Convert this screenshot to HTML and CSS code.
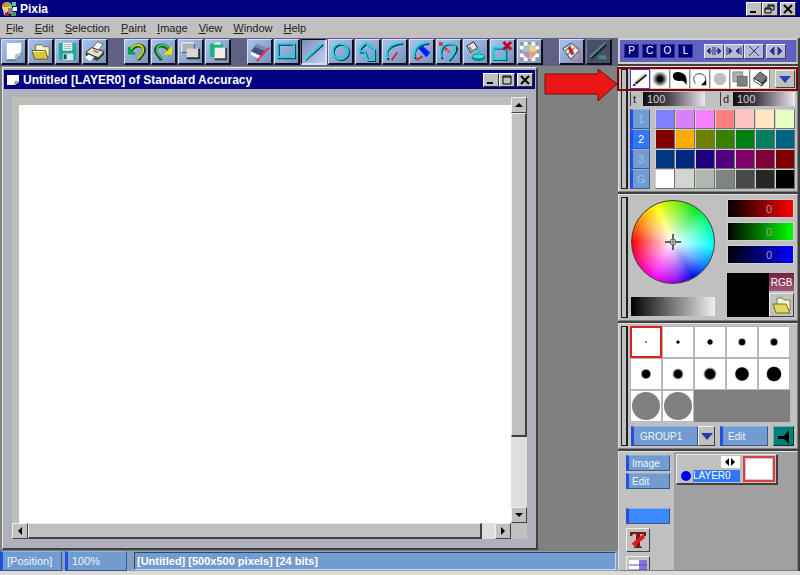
FILE: index.html
```html
<!DOCTYPE html>
<html lang="en">
<head>
  <meta charset="UTF-8" />
  <meta name="viewport" content="width=device-width, initial-scale=1.0"/>
  <title>Pixia</title>
  <link rel="stylesheet" href="styles.css">
</head>
<body>
  <header class="titlebar">
    <svg class="logo" viewBox="0 0 16 16">
      <circle cx="6" cy="6" r="5" fill="#e8d860"/>
      <path d="M1 6a5 5 0 0 1 5-5v5z" fill="#f08030"/>
      <path d="M6 1a5 5 0 0 1 5 5H6z" fill="#70c850"/>
      <path d="M2 9h4v5H3z" fill="#e0b0a0"/>
      <path d="M7 7h5v6H7z" fill="#a070a0"/>
      <path d="M11 1h4v4h-4z" fill="#58c878"/>
      <path d="M12 6h4v4h-4z" fill="#fff"/>
      <path d="M10 11h5v4h-5z" fill="#40a050"/>
      <path d="M4 12h4v3H4z" fill="#a02020"/>
    </svg>
    <h1>Pixia</h1>
    <div class="window-buttons">
      <button class="win-btn" aria-label="Minimize"><svg viewBox="0 0 12 10"><path d="M2 8h6" stroke="#000" stroke-width="2"/></svg></button>
      <button class="win-btn" aria-label="Restore"><svg viewBox="0 0 12 10"><path d="M4 4V1h6v5H8M4 2h6M1 4h6v5H1zM1 5h6" fill="none" stroke="#000"/></svg></button>
      <button class="win-btn close" aria-label="Close"><svg viewBox="0 0 12 10"><path d="M2 1l8 8M10 1L2 9" stroke="#000" stroke-width="2"/></svg></button>
    </div>
  </header>

  <nav class="menubar">
    <button><u>F</u>ile</button>
    <button><u>E</u>dit</button>
    <button><u>S</u>election</button>
    <button><u>P</u>aint</button>
    <button><u>I</u>mage</button>
    <button><u>V</u>iew</button>
    <button><u>W</u>indow</button>
    <button><u>H</u>elp</button>
  </nav>

  <main class="main">
    <div class="left">
      <!-- Toolbar -->
      <div class="toolbar">
        <div class="tool-group">
          <button class="tool" aria-label="New"><svg viewBox="0 0 24 24"><path d="M5 3h15v12l-5 5H5z" fill="#fff"/><path d="M20 13l-7 8 1-6z" fill="#b8b8b8"/><path d="M20 13v2l-6 6h-9" fill="none" stroke="#405070"/></svg></button>
          <button class="tool" aria-label="Open"><svg viewBox="0 0 24 24"><path d="M7 5h6l2 2h6v10H7z" fill="#f8f8c8" stroke="#707040"/><path d="M3 11h14l3 9H6z" fill="#d8c840" stroke="#605820"/><path d="M4 12h12" stroke="#fff8a0"/></svg></button>
          <button class="tool" aria-label="Save"><svg viewBox="0 0 24 24"><path d="M3 3h18v18H5l-2-2z" fill="#20a898"/><path d="M7 3h10v8H7z" fill="#fff"/><path d="M8 5h8M8 7h8M8 9h8" stroke="#90a8a8"/><path d="M7 14h11v7H7z" fill="#d8e0e0"/><path d="M8 15h3v5H8z" fill="#105060"/></svg></button>
          <button class="tool" aria-label="Print"><svg viewBox="0 0 24 24"><path d="M10 8l5-6 6 2-5 7z" fill="#fff" stroke="#707070"/><path d="M3 13l6-5 13 4-6 7z" fill="#e8e0d0" stroke="#303030"/><path d="M3 13v4l12 5 7-7v-3l-6 6z" fill="#404040"/><path d="M2 18l4-3 6 3-5 4z" fill="#fff"/><path d="M11 11l5 2" stroke="#a08840" stroke-width="2"/></svg></button>
        </div>
        <div class="tool-group">
          <button class="tool" aria-label="Undo"><svg viewBox="0 0 24 24"><path d="M6 11c4-7 14-7 14 0 0 4-4 5-6 10" fill="none" stroke="#304020" stroke-width="4"/><path d="M6 10c4-7 13-6 13 1 0 4-4 5-6 9" fill="none" stroke="#b8e000" stroke-width="2"/><path d="M3 6v9h9z" fill="#00a050"/></svg></button>
          <button class="tool" aria-label="Redo"><svg viewBox="0 0 24 24"><path d="M18 11C14 4 4 4 4 11c0 4 4 5 6 10" fill="none" stroke="#205028" stroke-width="4"/><path d="M18 10C14 3 5 4 5 11c0 4 4 5 6 9" fill="none" stroke="#30c858" stroke-width="2"/><path d="M21 6v9h-9z" fill="#f0e000"/></svg></button>
          <button class="tool" aria-label="Copy"><svg viewBox="0 0 24 24"><path d="M3 3h13v10H3z" fill="#b0b0b0"/><path d="M3 13V3h13" fill="none" stroke="#fff"/><path d="M3 13h13V4" fill="none" stroke="#505050"/><path d="M8 9h13v10H8z" fill="#d8d8d8"/><path d="M8 19h13V9" fill="none" stroke="#303030" stroke-width="2"/></svg></button>
          <button class="tool" aria-label="Paste"><svg viewBox="0 0 24 24"><path d="M4 4h14v14H4z" fill="#20b088"/><path d="M8 5l2-3h4l2 3z" fill="#c8f0e0"/><path d="M9 8h12v12H9z" fill="#f0f0e8"/><path d="M9 20h12V8" fill="none" stroke="#404040" stroke-width="2"/></svg></button>
        </div>
        <div class="tool-group">
          <button class="tool" aria-label="Eraser"><svg viewBox="0 0 24 24"><path d="M9 4l11 5-6 8-11-5z" fill="#485080"/><path d="M9 4l11 5-1 3L7 7z" fill="#8088b8"/><path d="M3 12l11 5-2 3-9-5z" fill="#fff"/><path d="M9 22L22 8" stroke="#e83050" stroke-width="2"/></svg></button>
          <button class="tool" aria-label="Rectangle"><svg viewBox="0 0 24 24" class="stroke"><path class="shade" d="M4 5h17v14H4z"/><path d="M3 4h17v14H3z"/></svg></button>
          <button class="tool pressed" aria-label="Line"><svg viewBox="0 0 24 24" class="stroke"><path class="shade" d="M4 21L22 5"/><path d="M3 21L21 4"/></svg></button>
          <button class="tool" aria-label="Ellipse"><svg viewBox="0 0 24 24" class="stroke"><circle class="shade" cx="13" cy="13" r="8"/><circle cx="12" cy="12" r="8"/></svg></button>
          <button class="tool" aria-label="Polygon"><svg viewBox="0 0 24 24" class="stroke"><path class="shade" d="M5 10l6-6 9 7v11h-7l-3-9H5z"/><path d="M4 9l6-6 9 7v11h-7l-3-9H4z"/></svg></button>
          <button class="tool" aria-label="Curve"><svg viewBox="0 0 24 24" class="stroke"><path class="shade" d="M6 21c-4-9 0-15 15-17"/><path d="M5 19C2 11 6 4 20 3"/><path class="red" d="M9 21l6-8"/></svg></button>
          <button class="tool" aria-label="Painted curve"><svg viewBox="0 0 24 24" class="stroke"><path class="shade" d="M6 20C3 11 8 5 20 4"/><path d="M5 18C3 10 8 4 18 3"/><path class="red" d="M7 21l6-4"/><path d="M9 9l4-3 8 7-4 5z" fill="#0020e8" stroke="none"/></svg></button>
          <button class="tool" aria-label="Bezier curve"><svg viewBox="0 0 24 24" class="stroke"><path class="shade" d="M6 20c-3-5-1-17 10-15 9 2 4 9-3 17"/><path d="M5 18C2 12 5 3 14 4c9 1 5 10-2 17"/><path d="M2 2h4v4H2zM8 8h3v3H8zM11 11h2v2h-2z" fill="#e03040" stroke="none"/></svg></button>
          <button class="tool" aria-label="Pour"><svg viewBox="0 0 24 24"><path d="M3 6l7-4 4 6-7 5z" fill="#e8e8e8" stroke="#202020"/><path d="M5 7l5 5" stroke="#909090" stroke-width="2"/><ellipse cx="15" cy="18" rx="7" ry="4" fill="#008890"/><path d="M13 9c4 0 3 4 3 8" fill="none" stroke="#20c8c8" stroke-width="2"/><ellipse cx="15" cy="17" rx="6" ry="2" fill="#40e0d8"/></svg></button>
          <button class="tool" aria-label="Remove area"><svg viewBox="0 0 24 24" class="stroke"><path class="shade" d="M3 9h13v12H3z"/><path d="M3 8h12v12H3z"/><path d="M13 2l8 8M21 2l-8 8" stroke="#c00020" stroke-width="3"/></svg></button>
          <button class="tool" aria-label="Pick colour"><svg viewBox="0 0 24 24"><path d="M2 2h20v20H2z" fill="#fff"/><path d="M2 2h4v4H2zM10 2h4v3h-4zM18 2h4v4h-4zM2 10h3v4H2zM19 10h3v4h-3zM2 18h4v4H2zM10 19h4v3h-4zM18 18h4v4h-4zM6 6h2v2H6zM16 6h2v2h-2z" fill="#989898"/><circle cx="12" cy="12" r="7" fill="#d8c890"/><path d="M12 5a7 7 0 0 1 7 7h-7z" fill="#e8d880"/><path d="M12 5a7 7 0 0 0-7 7h7z" fill="#a0c8b8"/><path d="M5 12a7 7 0 0 0 7 7v-7z" fill="#a890d8"/><path d="M19 12a7 7 0 0 1-7 7v-7z" fill="#e8a080"/></svg></button>
        </div>
        <div class="tool-group">
          <button class="tool" aria-label="Fill"><svg viewBox="0 0 24 24"><path d="M3 9l9-6 8 8-9 9z" fill="#f0f0e8" stroke="#303030"/><path d="M5 12l7-7M8 15l7-7" stroke="#989898" stroke-width="2"/><path d="M8 8l3-1 4 7-3 2z" fill="#c02020"/><path d="M16 7c5 0 5 6 5 14H11" fill="none" stroke="#f05858"/></svg></button>
          <button class="tool dark" aria-label="Pen"><svg viewBox="0 0 24 24"><path d="M4 19L20 4" stroke="#182830" stroke-width="4"/><path d="M3 18L19 3" stroke="#608890" stroke-width="2"/><path d="M12 16h8v4h-8z" fill="#389070"/></svg></button>
        </div>
      </div>

      <div class="workspace">
        <section class="document">
          <div class="doc-title">
            <svg class="doc-icon" viewBox="0 0 14 12"><path d="M1 1h12v7l-4 3H1z" fill="#fff"/><path d="M13 7l-5 4 1-4z" fill="#909090"/></svg>
            <h2>Untitled [LAYER0] of Standard Accuracy</h2>
            <div class="window-buttons">
              <button class="win-btn" aria-label="Minimize"><svg viewBox="0 0 12 10"><path d="M2 8h6" stroke="#000" stroke-width="2"/></svg></button>
              <button class="win-btn" aria-label="Maximize"><svg viewBox="0 0 12 10"><path d="M2 1h8v8H2zM2 2h8" fill="none" stroke="#000"/></svg></button>
              <button class="win-btn close" aria-label="Close"><svg viewBox="0 0 12 10"><path d="M2 1l8 8M10 1L2 9" stroke="#000" stroke-width="2"/></svg></button>
            </div>
          </div>
          <div class="doc-body">
            <div class="mat"><div class="canvas"></div></div>
            <div class="scroll vertical">
              <button aria-label="Scroll up"><svg viewBox="0 0 8 8"><path d="M0 6l4-4 4 4z"/></svg></button>
              <div class="thumb"></div>
              <button aria-label="Scroll down"><svg viewBox="0 0 8 8"><path d="M0 2l4 4 4-4z"/></svg></button>
            </div>
            <div class="scroll horizontal">
              <button aria-label="Scroll left"><svg viewBox="0 0 8 8"><path d="M6 0L2 4l4 4z"/></svg></button>
              <div class="thumb"></div>
              <button aria-label="Scroll right"><svg viewBox="0 0 8 8"><path d="M2 0l4 4-4 4z"/></svg></button>
            </div>
            <div class="corner"></div>
          </div>
        </section>
        <svg class="arrow" viewBox="0 0 74 34"><path d="M1 6h53V1l19 15-19 17v-7H1z" fill="#ed1616" stroke="#701010"/></svg>
      </div>

      <footer class="statusbar">
        <button class="flat position">[Position]</button>
        <button class="flat percent">100%</button>
        <p>[Untitled] [500x500 pixels] [24 bits]</p>
      </footer>
    </div>

    <aside class="dock">
      <div class="dock-header">
        <div class="letters">
          <button>P</button><button>C</button><button>O</button><button>L</button>
        </div>
        <div class="arrange">
          <button aria-label="Spread"><svg viewBox="0 0 16 10"><path d="M1 5l3-3v6zM15 5l-3-3v6zM4 5h2M10 5h2M7 1v8M9 1v8"/></svg></button>
          <button aria-label="Gather"><svg viewBox="0 0 16 10"><path d="M6 5L3 2v6zM10 5l3-3v6zM1 1v8M15 1v8"/></svg></button>
          <button aria-label="Close panels"><svg viewBox="0 0 16 10"><path d="M3 0l10 10M13 0L3 10"/></svg></button>
          <button aria-label="Move panels"><svg viewBox="0 0 16 10"><path d="M6 1v8L2 5zM10 1v8l4-4z"/></svg></button>
        </div>
      </div>

      <!-- Pen and palette -->
      <section class="panel">
        <div class="grip"></div>
        <div class="panel-body">
          <div class="pens">
            <button class="pen selected" aria-label="Pencil"><svg viewBox="0 0 18 18"><path d="M4 14L16 4" stroke="#202020" stroke-width="3"/><path d="M4 12L15 3" stroke="#c8c8c8" stroke-width="2"/><path d="M1 17l1-3 3 2z"/></svg></button>
            <button class="pen" aria-label="Airbrush"><span class="blur-dot"></span></button>
            <button class="pen" aria-label="Water"><svg viewBox="0 0 18 18"><path d="M1 6c0-6 9-6 13-2 3 3 3 8 2 12-1-3-3-5-6-5C5 12 1 10 1 6z"/></svg></button>
            <button class="pen" aria-label="Rotate"><svg viewBox="0 0 18 18"><path d="M4 14C-1 8 4 3 8 3c7 0 9 6 6 10" fill="none" stroke="#303030"/><path d="M16 10v6h-6z"/></svg></button>
            <button class="pen" aria-label="Blend"><svg viewBox="0 0 18 18"><circle cx="9" cy="9" r="7" fill="#c0c0c0"/></svg></button>
            <button class="pen" aria-label="Stamp"><svg viewBox="0 0 18 18"><path d="M1 1h11v11H1z" fill="#b0b0b0" stroke="#808080"/><path d="M6 6h11v11H6z" fill="#808080" stroke="#606060"/></svg></button>
            <button class="pen" aria-label="Erase"><svg viewBox="0 0 18 18"><path d="M9 1l8 6-6 7-9-6z" fill="#787878" stroke="#303030"/><path d="M2 8v3l9 6v-3z" fill="#fff" stroke="#303030"/><path d="M11 14v3l6-6V7z" fill="#404040"/></svg></button>
            <button class="more" aria-label="More pens"><svg viewBox="0 0 12 8"><path d="M0 1h12L6 8z" fill="#2840c0"/></svg></button>
          </div>
          <div class="amounts">
            <label for="thickness">t</label><input id="thickness" value="100">
            <label for="density">d</label><input id="density" value="100">
          </div>
          <div class="palette">
            <div class="tabs">
              <button>1</button><button class="active">2</button><button>3</button><button>G</button>
            </div>
            <div class="swatches" id="swatches"></div>
          </div>
        </div>
        <div class="highlight"></div>
      </section>

      <!-- Colour mixer -->
      <section class="panel">
        <div class="grip"></div>
        <div class="panel-body mixer">
          <div class="wheel-box">
            <div class="wheel"><svg viewBox="0 0 16 16"><path d="M8 0v16M0 8h16" stroke="#606060" stroke-width="2"/><circle cx="8" cy="8" r="3" fill="#d8d8d8" stroke="#606060"/><path d="M8 5v6M5 8h6" stroke="#707070"/></svg></div>
            <div class="value-bar"></div>
          </div>
          <div class="channels">
            <input class="red-channel" aria-label="Red" value="0">
            <input class="green-channel" aria-label="Green" value="0">
            <input class="blue-channel" aria-label="Blue" value="0">
            <div class="current">
              <div class="current-color"></div>
              <div class="current-side">
                <button class="rgb">RGB</button>
                <button class="folder" aria-label="Open palette"><svg viewBox="0 0 20 20"><path d="M5 3h5l2 2h6v10H5z" fill="#f8f8d0" stroke="#808050"/><path d="M1 9h13l4 9H4z" fill="#e0d858" stroke="#707020"/></svg></button>
              </div>
            </div>
          </div>
        </div>
      </section>

      <!-- Brush tips -->
      <section class="panel">
        <div class="grip"></div>
        <div class="panel-body">
          <div class="brushes" id="brushes"></div>
          <div class="brush-controls">
            <button class="flat group">GROUP1</button>
            <button class="more small" aria-label="Choose group"><svg viewBox="0 0 12 8"><path d="M0 1h12L6 8z" fill="#3038a8"/></svg></button>
            <button class="flat edit">Edit</button>
            <button class="sound" aria-label="Back"><svg viewBox="0 0 18 18"><path d="M14 2v14L9 11H3V8h6z"/></svg></button>
          </div>
        </div>
      </section>

      <!-- Layers -->
      <section class="panel layers">
        <div class="layer-buttons">
          <button class="flat">Image</button>
          <button class="flat">Edit</button>
          <button class="flat bright" aria-label="Layer mode"></button>
          <button class="icon-btn" aria-label="Text"><svg viewBox="0 0 20 20"><path d="M2 2h16v4h-2l-1-2h-3v12l2 1v1H6v-1l2-1V4H5L4 6H2z" fill="#801818"/><path d="M5 15L16 6" stroke="#e01818" stroke-width="4"/></svg></button>
          <button class="icon-btn" aria-label="Layer list"><svg viewBox="0 0 20 20"><path d="M1 2h10v16H1z" fill="#fff"/><path d="M11 2h8v16h-8z" fill="#8078e0"/><path d="M1 7h18M1 12h18" stroke="#5050a0"/></svg></button>
        </div>
        <div class="layer-list">
          <div class="layer">
            <div class="layer-info">
              <button class="layer-move" aria-label="Reorder"><svg viewBox="0 0 12 8"><path d="M5 0v8L1 4zM7 0v8l4-4z"/></svg></button>
              <div class="layer-name"><span class="dot"></span><span class="name">LAYER0</span></div>
            </div>
            <div class="thumbnail"></div>
          </div>
        </div>
      </section>
    </aside>
  </main>

  <script>
    const colors = [
      "#8080ff", "#d980ff", "#f880ff", "#ff8080", "#ffc4c4", "#ffe6c0", "#e4ffc0",
      "#800000", "#ffaa00", "#6f8000", "#388000", "#008010", "#008060", "#006480",
      "#003880", "#002880", "#200080", "#500080", "#800068", "#800038", "#800000",
      "#ffffff", "#d2d6d0", "#b0b6b0", "#808480", "#484a48", "#262826", "#000000"
    ];
    const swatches = document.getElementById("swatches");
    colors.forEach(color => {
      const swatch = document.createElement("button");
      swatch.style.background = color;
      swatch.setAttribute("aria-label", color);
      swatches.appendChild(swatch);
    });

    // radius of each tip and how much of it is soft
    const tips = [[1, 0], [1.5, 0], [2.5, 0], [3, 1.5], [3, 2], [4, 2], [4, 3], [5, 3], [6.5, 1], [7, 1]];
    const brushes = document.getElementById("brushes");
    for (let i = 0; i < 15; i++) {
      const brush = document.createElement("button");
      brush.setAttribute("aria-label", "Brush " + (i + 1));
      if (i === 0) brush.className = "selected";
      if (i < 10) {
        const [r, soft] = tips[i];
        const fill = i === 0 ? "#888" : "#000";
        brush.innerHTML = `<svg viewBox="0 0 30 30"><circle cx="15" cy="15" r="${r + soft / 2}" fill="#aaa"/><circle cx="15" cy="15" r="${r + soft / 4}" fill="#666"/><circle cx="15" cy="15" r="${r}" fill="${fill}"/></svg>`;
      } else if (i < 12) {
        brush.innerHTML = '<svg viewBox="0 0 30 30"><circle cx="15" cy="15" r="14" fill="#808080"/></svg>';
      } else {
        brush.className = "empty";
      }
      brushes.appendChild(brush);
    }
  </script>
</body>
</html>
```

FILE: styles.css
```css
* {
  box-sizing: border-box;
}

body {
  margin: 0;
  height: 100vh;
  overflow: hidden;
  display: flex;
  flex-direction: column;
  background: #dcdcd4;
  font-family: "Liberation Sans", Arial, sans-serif;
  font-size: 11px;
  color: #202020;
}

button,
input {
  margin: 0;
  padding: 0;
  border: 0;
  border-radius: 0;
  font: inherit;
  color: inherit;
}

h1,
h2,
p {
  margin: 0;
}

svg {
  display: block;
}

/* Title and menu */
.titlebar {
  flex: none;
  height: 17px;
  padding: 0 4px 0 1px;
  display: flex;
  align-items: center;
  background: #000080;
  color: #fff;
}

.logo {
  width: 16px;
  height: 16px;
  margin-right: 3px;
}

h1,
h2 {
  flex: 1;
  font-size: 12px;
  font-weight: bold;
}

.window-buttons {
  display: flex;
}

.win-btn {
  width: 16px;
  height: 14px;
  padding: 1px;
  background: #c0c0c0;
  border: 1px solid;
  border-color: #fff #303030 #303030 #fff;
}

.win-btn svg {
  width: 12px;
  height: 10px;
}

.win-btn.close {
  margin-left: 2px;
}

.menubar {
  flex: none;
  height: 21px;
  display: flex;
  align-items: center;
  background: #c0c0c0;
}

.menubar button {
  padding: 0 5px 0 6px;
  background: none;
}

.main {
  flex: 1;
  min-height: 0;
  margin-bottom: 4px;
  display: flex;
  padding-right: 2px;
  background: #404040;
}

.left {
  flex: 1;
  min-width: 0;
  display: flex;
  flex-direction: column;
}

/* Toolbar */
.toolbar {
  flex: none;
  height: 28px;
  padding: 1px;
  display: flex;
  gap: 16px;
  background: #606084;
}

.tool-group {
  display: flex;
  gap: 1px;
}

.tool {
  width: 26px;
  height: 26px;
  background: linear-gradient(135deg, #a8c4ec, #7890c0);
  border: 1px solid;
  border-color: #d0e0f8 #101018 #101018 #d0e0f8;
  border-right-width: 2px;
  border-bottom-width: 2px;
}

.tool svg {
  width: 23px;
  height: 23px;
}

.tool.pressed {
  background: linear-gradient(135deg, #7890c0, #c0d0f0);
  border-color: #101018 #d0e0f8 #d0e0f8 #101018;
}

.tool.dark {
  background: #485068;
  border-color: #788098 #101018 #101018 #788098;
}

.stroke {
  fill: none;
  stroke: #10dce0;
  stroke-width: 2;
}

.stroke .shade {
  stroke: #103050;
}

.stroke .red {
  stroke: #e02030;
}

/* Document window */
.workspace {
  flex: 1;
  min-height: 0;
  padding: 1px 0 1px 2px;
  display: flex;
  gap: 6px;
  background: #808080;
}

.document {
  flex: 1;
  display: flex;
  flex-direction: column;
  padding: 2px 1px 1px;
  background: #b0b0bc;
  border: 1px solid;
  border-color: #e8e8e8 #404040 #404040 #e8e8e8;
  border-right-width: 2px;
  border-bottom-width: 2px;
}

.doc-title {
  flex: none;
  height: 19px;
  padding: 0 2px;
  display: flex;
  align-items: center;
  background: #000080;
  color: #fff;
}

.doc-icon {
  width: 14px;
  height: 12px;
  margin-right: 3px;
}

.doc-body {
  flex: 1;
  margin: 8px;
  display: grid;
  grid-template-columns: 1fr 16px;
  grid-template-rows: 1fr 16px;
}

.mat {
  padding: 8px 0 0 7px;
  background: #b8c0b8;
}

.canvas {
  height: 100%;
  background: #fff;
}

.scroll {
  display: flex;
  background: #dedede;
}

.scroll button,
.thumb,
.more,
.icon-btn,
.folder {
  background: #c0c0c0;
  border: 1px solid;
  border-color: #eee #404040 #404040 #eee;
}

.scroll button {
  flex: none;
  width: 16px;
  height: 16px;
  padding: 3px;
}

.scroll button svg {
  width: 8px;
  height: 8px;
}

.scroll button:last-child {
  margin: auto 0 0 auto;
}

.thumb {
  border-width: 1px 2px 2px 1px;
}

.vertical {
  flex-direction: column;
}

.vertical .thumb {
  height: 76%;
}

.horizontal .thumb {
  width: 91%;
}

.corner {
  background: #c0c0c0;
}

.arrow {
  flex: none;
  width: 74px;
  height: 34px;
  margin-top: 1px;
}

/* Status bar */
.statusbar {
  flex: none;
  height: 20px;
  display: flex;
  gap: 3px;
  background: #88a0c0;
  color: #fff;
}

.flat {
  background: #729cd0;
  border: 1px solid;
  border-color: #88b0e0 #385888 #385888 #2050e0;
  border-left-width: 3px;
  color: #e8f4ff;
  text-align: left;
  font-size: 10px;
}

.statusbar .flat {
  width: 62px;
  padding-left: 4px;
  font-size: 11px;
}

.statusbar p {
  flex: 1;
  margin: 1px 2px 1px 4px;
  padding-left: 2px;
  line-height: 17px;
  background: #729cd0;
  border: 1px solid;
  border-color: #304868 #c0d8f0 #c0d8f0 #304868;
  font-weight: bold;
}

/* Dock */
.dock {
  flex: none;
  width: 180px;
  display: flex;
  flex-direction: column;
  gap: 2px;
}

.dock-header {
  height: 26px;
  display: flex;
  align-items: center;
  justify-content: space-between;
  padding: 0 10px 0 4px;
  background: #6060c0;
  border: 2px solid;
  border-color: #d0d0d0 #a0a0a0 #d0d0d0 #d0d0d0;
}

.letters {
  display: flex;
  gap: 3px;
}

.letters button {
  width: 15px;
  height: 14px;
  background: #000080;
  border: 1px solid #303090;
  color: #fff;
  font-size: 10px;
  line-height: 12px;
}

.arrange {
  display: flex;
}

.arrange button {
  width: 20px;
  height: 15px;
  padding: 1px;
  background: #b8b8d8;
  border: 1px solid;
  border-color: #e8e8f8 #404060 #404060 #e8e8f8;
}

.arrange svg {
  width: 16px;
  height: 10px;
  fill: #303080;
  stroke: #303080;
}

.arrange button:last-child {
  margin-left: 2px;
}

.panel {
  position: relative;
  display: flex;
  gap: 2px;
  padding: 2px;
  background: #c0c0c0;
  border: 1px solid;
  border-color: #e0e0e0 #808080 #808080 #e0e0e0;
}

.grip {
  width: 7px;
  background: #c0c0c0;
  border: 1px solid #202020;
  border-right-width: 2px;
}

.panel-body {
  flex: 1;
}

.pens {
  display: flex;
  height: 20px;
}

.pen {
  width: 20px;
  padding: 1px;
  background: #fff;
  border: 1px solid #d0d0d0;
  border-right-color: #888;
}

.pen.selected {
  border-color: #4040e0;
}

.pen svg {
  width: 16px;
  height: 16px;
}

.blur-dot {
  display: block;
  width: 16px;
  height: 16px;
  background: radial-gradient(#000 20%, #fff 70%);
}

.more {
  display: flex;
  align-items: center;
  justify-content: center;
}

.pens .more {
  width: 20px;
  height: 18px;
  margin: 1px 0 0 auto;
}

.more svg {
  width: 12px;
  height: 8px;
}

.highlight {
  position: absolute;
  top: 0;
  left: -2px;
  right: -1px;
  height: 24px;
  border: 2px solid #800000;
}

.amounts {
  display: flex;
  height: 14px;
  margin: 3px 0;
}

.amounts label {
  width: 13px;
  line-height: 14px;
  padding-left: 2px;
  border-left: 1px solid #404040;
}

.amounts label + input + label {
  margin-left: auto;
}

.amounts input {
  width: 62px;
  padding-left: 4px;
  background: linear-gradient(to right, #101010, #484048 40%, #f0e8f0);
  color: #d0d0d0;
}

.palette {
  display: flex;
  justify-content: space-between;
}

.tabs {
  display: grid;
  grid-template-rows: repeat(4, 20px);
}

.tabs button {
  width: 20px;
  background: #729cd0;
  border: 1px solid;
  border-color: #90b0d8 #405890 #405890 #2050e0;
  border-left-width: 3px;
  color: #a0c0e8;
}

.tabs .active {
  background: #3078f8;
  color: #fff;
}

.swatches {
  display: grid;
  grid-template-columns: repeat(7, 20px);
  grid-template-rows: repeat(4, 20px);
}

.swatches button {
  border: 1px solid;
  border-color: #d0d0d0 #707070 #707070 #d0d0d0;
}

/* Mixer */
.mixer {
  display: flex;
  justify-content: space-between;
  padding: 2px 1px 1px 1px;
}

.wheel {
  width: 84px;
  height: 84px;
  margin-top: 1px;
  display: flex;
  align-items: center;
  justify-content: center;
  border: 1px solid #404040;
  border-radius: 50%;
  background:
    radial-gradient(closest-side, #fff, rgba(255, 255, 255, 0.5) 50%, rgba(255, 255, 255, 0)),
    conic-gradient(#90f000, #00e820 35deg, #00ffa0 65deg, #00ffff 95deg, #0080ff 125deg, #0000e8 150deg, #9000f0 175deg, #ff00f0 210deg, #ff0080 240deg, #ff0000 270deg, #ff8000 300deg, #ffff00 335deg, #90f000);
}

.wheel svg {
  width: 16px;
  height: 16px;
}

.value-bar {
  width: 84px;
  height: 19px;
  margin-top: 13px;
  background: linear-gradient(to right, #000, #f0f0f0);
}

.channels {
  width: 67px;
  display: flex;
  flex-direction: column;
  gap: 4px;
}

.channels input {
  width: 67px;
  height: 19px;
  padding-left: 38px;
  border: 1px solid #d0d0d0;
  color: #a0a0a0;
}

.red-channel {
  background: linear-gradient(to right, #000, #f00);
}

.green-channel {
  background: linear-gradient(to right, #000, #0f0);
}

.blue-channel {
  background: linear-gradient(to right, #000, #00f);
}

.current {
  display: flex;
  height: 44px;
  margin-top: 5px;
}

.current-color {
  flex: 1;
  background: #000;
}

.current-side {
  width: 25px;
  display: flex;
  flex-direction: column;
  gap: 2px;
}

.rgb {
  height: 18px;
  background: linear-gradient(#702040, #a05878);
  color: #fff;
  font-size: 10px;
}

.folder {
  flex: 1;
  padding: 1px 2px;
}

.folder svg {
  width: 20px;
  height: 20px;
}

/* Brushes */
.brushes {
  display: grid;
  grid-template-columns: repeat(5, 32px);
  grid-template-rows: repeat(3, 32px);
}

.brushes button {
  background: #fff;
  border: 1px solid #b8b8b8;
}

.brushes svg {
  width: 30px;
  height: 30px;
}

.brushes .selected {
  border: 2px solid #e02020;
}

.brushes .selected svg {
  width: 28px;
  height: 28px;
}

.brushes .empty {
  background: #808080;
  border-color: #808080;
}

.brush-controls {
  display: flex;
  height: 20px;
  margin: 4px 1px 0 1px;
}

.brush-controls .group {
  width: 67px;
  padding-left: 6px;
}

.more.small {
  width: 17px;
}

.brush-controls .edit {
  width: 48px;
  margin: 0 auto;
  padding-left: 5px;
}

.sound {
  width: 21px;
  padding: 1px;
  background: #008078;
  border: 1px solid;
  border-color: #60b0a8 #003030 #003030 #60b0a8;
}

.sound svg {
  width: 18px;
  height: 18px;
}

/* Layers */
.layers {
  flex: 1;
  min-height: 0;
  padding: 0;
  gap: 3px;
  overflow: hidden;
}

.layer-buttons {
  width: 52px;
  padding: 3px 0 0 7px;
  display: flex;
  flex-direction: column;
  align-items: flex-start;
  gap: 2px;
}

.layer-buttons .flat {
  flex: none;
  width: 44px;
  height: 16px;
  padding-left: 3px;
}

.layer-buttons .bright {
  margin-top: 17px;
  background: #4088ff;
}

.icon-btn {
  flex: none;
  width: 24px;
  height: 24px;
  margin-top: 2px;
  padding: 1px;
}

.icon-btn svg {
  width: 20px;
  height: 20px;
}

.layer-list {
  flex: 1;
  background: #a0a0a0;
  padding: 2px;
}

.layer {
  width: 102px;
  height: 31px;
  padding: 1px;
  display: flex;
  justify-content: space-between;
  background: #c0c0c0;
  border: 1px solid;
  border-color: #e8e8e8 #404040 #404040 #e8e8e8;
  border-width: 1px 2px 2px 1px;
}

.layer-info {
  width: 62px;
  display: flex;
  flex-direction: column;
  justify-content: space-between;
}

.layer-move {
  width: 19px;
  height: 12px;
  padding: 2px 3px;
  background: #fff;
  align-self: flex-end;
}

.layer-move svg {
  width: 12px;
  height: 8px;
}

.layer-name {
  display: flex;
  align-items: center;
  gap: 2px;
  padding-left: 3px;
  color: #fff;
}

.dot {
  width: 10px;
  height: 10px;
  border-radius: 50%;
  background: #0000f0;
}

.name {
  flex: 1;
  background: #3078f8;
  font-size: 10px;
  line-height: 12px;
}

.thumbnail {
  width: 32px;
  background: #fff;
  border: 2px solid #d84040;
  outline: 1px solid #e0c0c0;
  outline-offset: -3px;
}
```
